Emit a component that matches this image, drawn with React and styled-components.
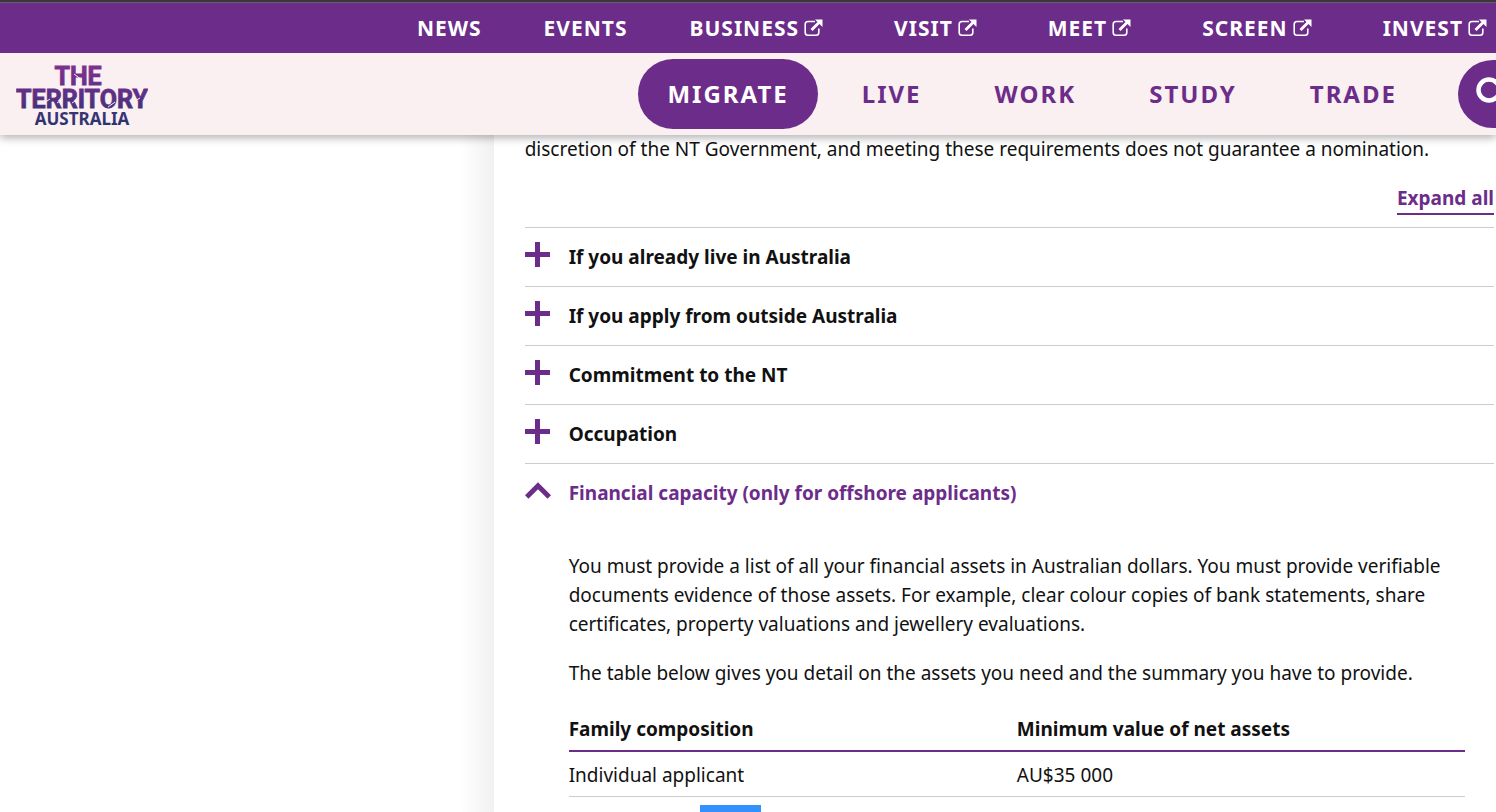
import { useState } from "react";
import styled, { createGlobalStyle } from "styled-components";

const PURPLE = "#6c2c8a";
const BLUSH = "#faeff1";

const topLinks = [
	{ label: "News" },
	{ label: "Events" },
	{ label: "Business", external: true },
	{ label: "Visit", external: true },
	{ label: "Meet", external: true },
	{ label: "Screen", external: true },
	{ label: "Invest", external: true },
];

const mainLinks = ["Migrate", "Live", "Work", "Study", "Trade"];

const sections = [
	"If you already live in Australia",
	"If you apply from outside Australia",
	"Commitment to the NT",
	"Occupation",
];

function ExternalIcon() {
	return (
		<svg width="19" height="18" viewBox="0 0 19 18" fill="none" stroke="currentColor" aria-hidden="true">
			<path d="M11 2.5H4A2.8 2.8 0 0 0 1.2 5.3V13.500A2.800 2.800 0 0 0 4 16.300H12A2.800 2.800 0 0 0 14.800 13.500V9.500" strokeWidth="1.6" />
			<path d="M7.500 11L15.500 3" strokeWidth="2.800" />
			<path d="M11 0.500H18.500V8Z" fill="currentColor" stroke="none" />
		</svg>
	);
}

function PlusIcon() {
	return (
		<svg width="26" height="26" viewBox="0 0 26 26" aria-hidden="true">
			<path d="M0 10H10V0H15V10H25V15H15V25H10V15H0Z" fill="currentColor" />
		</svg>
	);
}

function ChevronIcon() {
	return (
		<svg width="26" height="26" viewBox="0 0 26 26" fill="none" aria-hidden="true">
			<path d="M1.700 19L13 7.700L24.300 19" stroke="currentColor" strokeWidth="5" />
		</svg>
	);
}

function Logo() {
	return (
		<svg width="132" height="70" viewBox="0 0 132 70" role="img" aria-label="The Territory Australia">
			<defs>
				<linearGradient id="logo-fill" gradientUnits="userSpaceOnUse" x1="0" y1="0" x2="0" y2="68">
					<stop offset="0" stopColor="#86308f" />
					<stop offset="0.5" stopColor="#5f3085" />
					<stop offset="1" stopColor="#26346c" />
				</linearGradient>
			</defs>
			<g fill="url(#logo-fill)" textAnchor="middle" fontWeight="700">
				<text x="62" y="26" fontSize="25" fontFamily="Roboto, sans-serif" stroke="url(#logo-fill)" strokeWidth="0.8">THE</text>
				<text x="66" y="49" fontSize="25" fontFamily="Roboto, sans-serif" stroke="url(#logo-fill)" strokeWidth="0.8">TERRITORY</text>
				<text x="66" y="66" fontSize="17" fontFamily="'Noto Sans', sans-serif">AUSTRALIA</text>
			</g>
			{/* stencil cuts */}
			<path
				d="M58 15L66 21M28 44L34 40M41 44L47 40M56 44L62 40M92 48L99 43M117 43L124 39"
				stroke={BLUSH}
				strokeWidth="1"
			/>
		</svg>
	);
}

export default function App() {
	const [open, setOpen] = useState(true);
	return (
		<Page>
			<GlobalStyle />
			<Header>
				<TopNav aria-label="Sites">
					{topLinks.map((link) => (
						<TopLink key={link.label} href="#" $external={link.external}>
							{link.label}
							{link.external && <ExternalIcon />}
						</TopLink>
					))}
				</TopNav>
				<MainBar>
					<LogoLink href="#">
						<Logo />
					</LogoLink>
					<MainNav aria-label="Main">
						{mainLinks.map((label) => (
							<MainLink key={label} href="#" $active={label === "Migrate"}>
								{label}
							</MainLink>
						))}
					</MainNav>
					<SearchButton type="button" aria-label="Search">
						<svg width="34" height="34" viewBox="0 0 34 34" fill="none" stroke="currentColor" aria-hidden="true">
							<circle cx="13" cy="13" r="10.500" strokeWidth="4.500" />
							<path d="M20.500 20.500L31 31" strokeWidth="5.500" />
						</svg>
					</SearchButton>
				</MainBar>
			</Header>
			<Layout>
				<Side />
				<Content>
					<Text>discretion of the NT Government, and meeting these requirements does not guarantee a nomination.</Text>
					<Actions>
						<ExpandLink href="#">Expand all</ExpandLink>
					</Actions>
					{sections.map((title) => (
						<Toggle key={title} type="button" aria-expanded="false">
							<PlusIcon />
							{title}
						</Toggle>
					))}
					<Toggle type="button" $open={open} aria-expanded={open} onClick={() => setOpen(!open)}>
						{open ? <ChevronIcon /> : <PlusIcon />}
						Financial capacity (only for offshore applicants)
					</Toggle>
					{open && (
						<Panel>
							<Text>
								You must provide a list of all your financial assets in Australian dollars. You must provide verifiable
								documents evidence of those assets. For example, clear colour copies of bank statements, share
								certificates, property valuations and jewellery evaluations.
							</Text>
							<Text>The table below gives you detail on the assets you need and the summary you have to provide.</Text>
							<AssetTable>
								<thead>
									<tr>
										<th scope="col">Family composition</th>
										<th scope="col">Minimum value of net assets</th>
									</tr>
								</thead>
								<tbody>
									<tr>
										<td>Individual applicant</td>
										<td>AU$35 000</td>
									</tr>
									<tr>
										<td>
											Family earned <Selected>people</Selected>
										</td>
										<td>AU$55 000</td>
									</tr>
								</tbody>
							</AssetTable>
						</Panel>
					)}
				</Content>
			</Layout>
		</Page>
	);
}

const GlobalStyle = createGlobalStyle`
	* {
		box-sizing: border-box;
	}
	html {
		scrollbar-width: none;
	}
	body {
		margin: 0;
		background: #fff;
		color: #111;
		font-family: "Noto Sans", "Open Sans", sans-serif;
		font-size: 19px;
		line-height: 29px;
	}
`;

const Page = styled.div`
	min-height: 100vh;
	overflow-x: clip;
	display: flex;
	flex-direction: column;
`;

const Header = styled.header`
	position: sticky;
	top: 0;
	z-index: 1;
	box-shadow: 0 3px 8px rgba(0, 0, 0, 0.3);
`;

const TopNav = styled.nav`
	display: flex;
	justify-content: flex-end;
	align-items: center;
	gap: 62px;
	height: 53px;
	padding-top: 1px;
	border-top: 2px solid #383838;
	background: ${PURPLE};
	box-shadow: inset 0 1px #6b5a76;
`;

const TopLink = styled.a`
	display: flex;
	align-items: center;
	gap: 5px;
	margin-right: ${(props) => (props.$external ? "9px" : 0)};
	color: #fff;
	font-size: 21px;
	font-weight: 700;
	letter-spacing: 1px;
	text-decoration: none;
	text-transform: uppercase;
`;

const MainBar = styled.div`
	display: flex;
	align-items: center;
	height: 82px;
	padding-left: 16px;
	background: ${BLUSH};
`;

const LogoLink = styled.a`
	display: flex;
	margin-right: auto;
`;

const MainNav = styled.nav`
	display: flex;
	gap: 15px;
	margin-right: 32px;
`;

const MainLink = styled.a`
	padding: 0 29px;
	border-radius: 35px;
	background: ${(props) => (props.$active ? PURPLE : "transparent")};
	color: ${(props) => (props.$active ? "#fff" : PURPLE)};
	font-size: 24px;
	font-weight: 700;
	line-height: 70px;
	letter-spacing: 2px;
	text-decoration: none;
	text-transform: uppercase;
`;

const SearchButton = styled.button`
	flex: none;
	display: flex;
	align-items: center;
	justify-content: center;
	width: 70px;
	height: 68px;
	margin-right: -32px;
	padding: 0;
	border: 0;
	border-radius: 50%;
	background: ${PURPLE};
	color: #fff;
`;

const Layout = styled.div`
	flex: 1;
	display: grid;
	grid-template-columns: 33% 1fr;
`;

const Side = styled.aside`
	background: linear-gradient(to left, #f1f1f1, #fff 34px);
`;

const Content = styled.main`
	padding: 0 2px 40px 31px;
`;

const Text = styled.p`
	margin: 0 0 20px;
`;

const Actions = styled.div`
	display: flex;
	justify-content: flex-end;
	margin-bottom: 12px;
`;

const ExpandLink = styled.a`
	border-bottom: 2px solid ${PURPLE};
	color: ${PURPLE};
	font-weight: 700;
	text-decoration: none;
`;

const Toggle = styled.button`
	display: flex;
	align-items: center;
	gap: 18px;
	width: 100%;
	height: 59px;
	padding: 0;
	border: 0;
	border-top: 1px solid #ccc;
	background: none;
	color: ${(props) => (props.$open ? PURPLE : "#111")};
	font: inherit;
	font-weight: 700;
	text-align: left;

	svg {
		margin-bottom: 4px;
		color: ${PURPLE};
	}
`;

const Panel = styled.div`
	padding: 30px 29px 0 44px;
`;

const AssetTable = styled.table`
	width: 100%;
	border-collapse: collapse;
	table-layout: fixed;

	th,
	td {
		height: 45px;
		padding: 0;
		text-align: left;
	}
	th {
		height: 43px;
		border-bottom: 2px solid ${PURPLE};
	}
	td {
		padding-top: 3px;
		border-bottom: 1px solid #ccc;
	}
`;

const Selected = styled.mark`
	padding: 2px 0;
	background: #3390ff;
	color: #fff;
`;
